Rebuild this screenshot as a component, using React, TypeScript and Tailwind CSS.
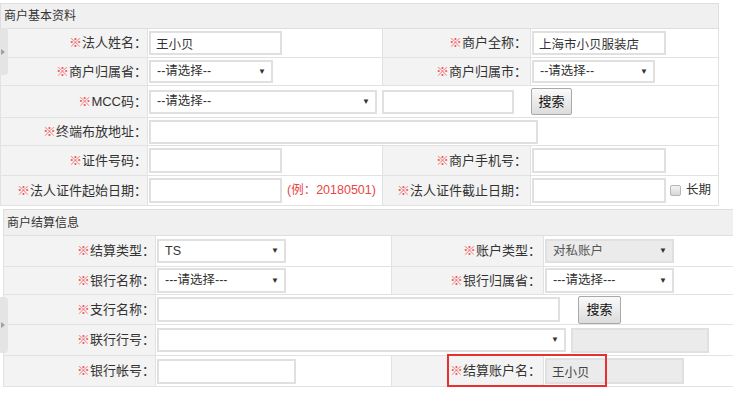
import React from "react";

const label = "bg-[#f3f3f3] border border-[#e2e2e2] text-right text-[13px] text-[#333] whitespace-nowrap";
const value = "bg-white border border-[#e2e2e2] pl-[1px] whitespace-nowrap";
const box = "align-middle border-2 border-[#e0e0e0] text-[12.5px] text-[#333] outline-none";

function Req({ text }: { text: string }) {
  return (
    <>
      <span className="text-[#f25a5a]">※</span>
      {text}：
    </>
  );
}

function TextBox({ size, val = "", disabled = false }: { size: string; val?: string; disabled?: boolean }) {
  return (
    <input
      readOnly
      value={val}
      className={`${box} ${size} px-[5px] ${disabled ? "bg-[#ebebeb] text-[#444]" : "bg-white"}`}
    />
  );
}

function Select({ size, val = "", disabled = false }: { size: string; val?: string; disabled?: boolean }) {
  return (
    <div className={`relative inline-block align-middle ${size}`}>
      <select
        disabled={disabled}
        defaultValue={val}
        className={`${box} appearance-none w-full h-full pl-[6px] pr-[18px] ${disabled ? "bg-[#ebebeb] text-[#555]" : "bg-white"}`}
      >
        <option value={val}>{val}</option>
      </select>
      <span className="absolute right-[7px] top-1/2 -translate-y-1/2 text-[8px] leading-none text-[#333] pointer-events-none">▼</span>
    </div>
  );
}

function SearchBtn({ size }: { size: string }) {
  return (
    <button className={`inline-block align-middle ${size} border border-[#a9a9a9] rounded-[2px] bg-gradient-to-b from-[#fafafa] to-[#dcdcdc] text-[13px] text-[#111]`}>
      搜索
    </button>
  );
}

function SideTab({ pos }: { pos: string }) {
  return (
    <div className={`absolute left-0 ${pos} w-[8px] rounded-r-[4px] bg-[#e4e4e4] flex items-center`}>
      <span className="ml-[1px] w-0 h-0 border-y-[3px] border-y-transparent border-l-[4px] border-l-[#a0a0a0]" />
    </div>
  );
}

export default function App() {
  return (
    <div className="relative w-[733px] h-[393px] overflow-hidden bg-white font-['Liberation_Sans','Noto_Sans_CJK_SC',sans-serif] text-[12px] text-[#333]">
      <div className="pt-[3px]">
        <table className="table-fixed border-collapse w-[718px]">
          <colgroup>
            <col className="w-[147px]" />
            <col className="w-[235px]" />
            <col className="w-[148px]" />
            <col className="w-[188px]" />
          </colgroup>
          <tbody>
            <tr className="h-[25px]">
              <td colSpan={4} className="bg-[#f0f0f0] border border-[#dedede] pl-[3px] text-[12px]">商户基本资料</td>
            </tr>
            <tr className="h-[29px]">
              <td className={`${label} pr-0`}><Req text="法人姓名" /></td>
              <td className={value}><TextBox size="w-[133px] h-[24px]" val="王小贝" /></td>
              <td className={`${label} pr-[3px]`}><Req text="商户全称" /></td>
              <td className={value}><TextBox size="w-[134px] h-[24px]" val="上海市小贝服装店" /></td>
            </tr>
            <tr className="h-[28px]">
              <td className={`${label} pr-0`}><Req text="商户归属省" /></td>
              <td className={value}><Select size="w-[124px] h-[23px]" val="--请选择--" /></td>
              <td className={`${label} pr-[3px]`}><Req text="商户归属市" /></td>
              <td className={value}><Select size="w-[123px] h-[23px]" val="--请选择--" /></td>
            </tr>
            <tr className="h-[32px]">
              <td className={`${label} pr-0`}><Req text="MCC码" /></td>
              <td colSpan={3} className={value}>
                <div className="flex items-center">
                  <Select size="w-[228px] h-[24px]" val="--请选择--" />
                  <span className="ml-[5px]"><TextBox size="w-[132px] h-[24px]" /></span>
                  <span className="ml-[17px]"><SearchBtn size="w-[41px] h-[27px]" /></span>
                </div>
              </td>
            </tr>
            <tr className="h-[28px]">
              <td className={`${label} pr-0`}><Req text="终端布放地址" /></td>
              <td colSpan={3} className={value}><TextBox size="w-[389px] h-[24px]" /></td>
            </tr>
            <tr className="h-[30px]">
              <td className={`${label} pr-0`}><Req text="证件号码" /></td>
              <td className={value}><TextBox size="w-[133px] h-[25px]" /></td>
              <td className={`${label} pr-[3px]`}><Req text="商户手机号" /></td>
              <td className={value}><TextBox size="w-[134px] h-[25px]" /></td>
            </tr>
            <tr className="h-[30px]">
              <td className={`${label} pr-0`}><Req text="法人证件起始日期" /></td>
              <td className={value}>
                <div className="flex items-center">
                  <TextBox size="w-[133px] h-[25px]" />
                  <span className="ml-[5px] text-[12.5px] text-[#e84545]">(例：20180501)</span>
                </div>
              </td>
              <td className={`${label} pr-[3px]`}><Req text="法人证件截止日期" /></td>
              <td className={value}>
                <div className="flex items-center">
                  <TextBox size="w-[134px] h-[25px]" />
                  <span className="ml-[4px] w-[11px] h-[11px] rounded-[2px] border border-[#b5b5b5] bg-gradient-to-b from-[#f4f4f4] to-[#d8d8d8]" />
                  <span className="ml-[5px] text-[12.5px]">长期</span>
                </div>
              </td>
            </tr>
          </tbody>
        </table>
      </div>

      <div className="pt-[3px] pl-[3px]">
        <table className="table-fixed border-collapse w-[742px]">
          <colgroup>
            <col className="w-[152px]" />
            <col className="w-[236px]" />
            <col className="w-[152px]" />
            <col className="w-[202px]" />
          </colgroup>
          <tbody>
            <tr className="h-[26px]">
              <td colSpan={4} className="bg-[#f0f0f0] border border-[#dedede] pl-[3px] text-[12px]">商户结算信息</td>
            </tr>
            <tr className="h-[31px]">
              <td className={`${label} pr-0`}><Req text="结算类型" /></td>
              <td className={value}><Select size="w-[129px] h-[24px]" val="TS" /></td>
              <td className={`${label} pr-[2px]`}><Req text="账户类型" /></td>
              <td className={value}><Select size="w-[129px] h-[24px]" val="对私账户" disabled /></td>
            </tr>
            <tr className="h-[28px]">
              <td className={`${label} pr-0`}><Req text="银行名称" /></td>
              <td className={value}><Select size="w-[129px] h-[25px]" val="---请选择---" /></td>
              <td className={`${label} pr-[2px]`}><Req text="银行归属省" /></td>
              <td className={value}><Select size="w-[129px] h-[25px]" val="---请选择---" /></td>
            </tr>
            <tr className="h-[30px]">
              <td className={`${label} pr-0`}><Req text="支行名称" /></td>
              <td colSpan={3} className={value}>
                <div className="flex items-center">
                  <TextBox size="w-[403px] h-[25px]" />
                  <span className="ml-[18px]"><SearchBtn size="w-[43px] h-[28px]" /></span>
                </div>
              </td>
            </tr>
            <tr className="h-[31px]">
              <td className={`${label} pr-0`}><Req text="联行行号" /></td>
              <td colSpan={3} className={value}>
                <div className="flex items-center">
                  <Select size="w-[409px] h-[24px]" />
                  <span className="ml-[5px]"><TextBox size="w-[138px] h-[25px]" disabled /></span>
                </div>
              </td>
            </tr>
            <tr className="h-[31px]">
              <td className={`${label} pr-0`}><Req text="银行帐号" /></td>
              <td className={value}><TextBox size="w-[139px] h-[25px]" /></td>
              <td className={`${label} pr-[2px]`}><Req text="结算账户名" /></td>
              <td className={value}><TextBox size="w-[139px] h-[26px]" val="王小贝" disabled /></td>
            </tr>
          </tbody>
        </table>
      </div>

      <SideTab pos="top-[28px] h-[47px]" />
      <SideTab pos="top-[297px] h-[56px]" />
      <div className="absolute left-[447px] top-[354px] w-[160px] h-[33px] border-2 border-[#e83030]" />
    </div>
  );
}
